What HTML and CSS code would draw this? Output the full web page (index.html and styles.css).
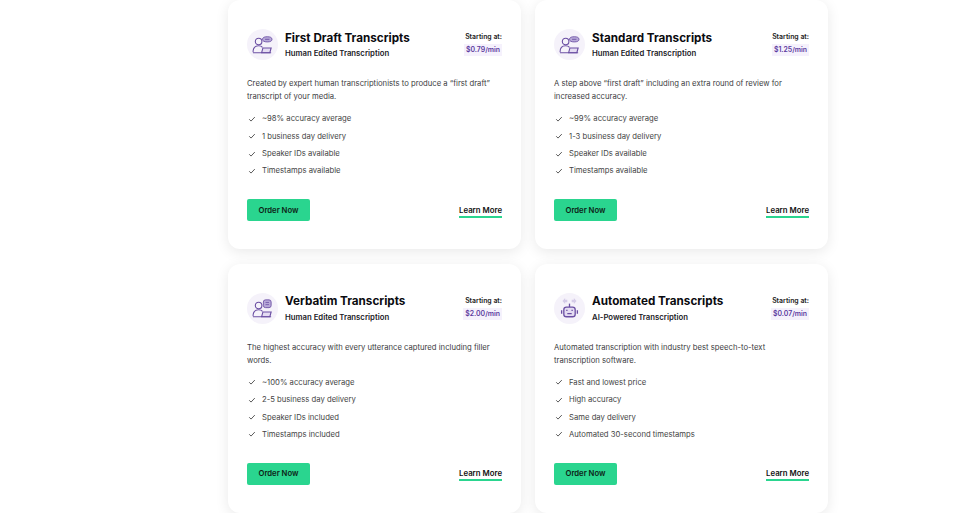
FILE: index.html
```html
<!DOCTYPE html>
<html lang="en">
<head>
    <meta charset="UTF-8">
    <meta name="viewport" content="width=device-width, initial-scale=1.0">
    <title>Transcripts</title>
    <link rel="stylesheet" href="styles.css">
</head>
<body>
    <svg class="defs" width="0" height="0">
        <symbol id="person" viewBox="0 0 24 22">
            <g fill="none" stroke="#6b4fa3" stroke-width="1.3">
                <circle cx="7.5" cy="7.500" r="3.800"/>
                <path d="M1 20c0-5 2.500-7.500 6.500-7.500 2 0 3.500.6 4.500 1.700"/>
                <path d="M11 20.500l1.500-5.500h9.500l-1.500 5.500z" fill="#e4dcf2"/>
                <path d="M1 20.500h21"/>
            </g>
        </symbol>
        <symbol id="check" viewBox="0 0 10 10">
            <path d="M1.500 5.300l2.300 2.300 4.700-5" fill="none" stroke="#444" stroke-width="1.100"/>
        </symbol>
    </svg>

    <main class="grid">
        <section class="card">
            <div class="card-head">
                <div class="icon-circle">
                    <svg class="icon" viewBox="0 0 24 22"><use href="#person"/>
                        <ellipse cx="17.500" cy="5" rx="5.500" ry="3" fill="#b7a8d8" stroke="#6b4fa3"/>
                        <path d="M15 5h5" stroke="#6b4fa3"/>
                    </svg>
                </div>
                <div class="titles">
                    <h2>First Draft Transcripts</h2>
                    <p class="subtitle">Human Edited Transcription</p>
                </div>
                <div class="price">
                    <span class="price-label">Starting at:</span>
                    <span class="price-value">$0.79/min</span>
                </div>
            </div>
            <p class="desc">Created by expert human transcriptionists to produce a “first draft” transcript of your media.</p>
            <ul class="features">
                <li><svg class="check"><use href="#check"/></svg>~98% accuracy average</li>
                <li><svg class="check"><use href="#check"/></svg>1 business day delivery</li>
                <li><svg class="check"><use href="#check"/></svg>Speaker IDs available</li>
                <li><svg class="check"><use href="#check"/></svg>Timestamps available</li>
            </ul>
            <div class="actions">
                <a class="order-btn" href="#">Order Now</a>
                <a class="learn-more" href="#">Learn More</a>
            </div>
        </section>

        <section class="card">
            <div class="card-head">
                <div class="icon-circle">
                    <svg class="icon" viewBox="0 0 24 22"><use href="#person"/>
                        <ellipse cx="17.500" cy="5" rx="5.500" ry="3" fill="#b7a8d8" stroke="#6b4fa3"/>
                        <path d="M15 5h5" stroke="#6b4fa3"/>
                    </svg>
                </div>
                <div class="titles">
                    <h2>Standard Transcripts</h2>
                    <p class="subtitle">Human Edited Transcription</p>
                </div>
                <div class="price">
                    <span class="price-label">Starting at:</span>
                    <span class="price-value">$1.25/min</span>
                </div>
            </div>
            <p class="desc">A step above “first draft” including an extra round of review for increased accuracy.</p>
            <ul class="features">
                <li><svg class="check"><use href="#check"/></svg>~99% accuracy average</li>
                <li><svg class="check"><use href="#check"/></svg>1-3 business day delivery</li>
                <li><svg class="check"><use href="#check"/></svg>Speaker IDs available</li>
                <li><svg class="check"><use href="#check"/></svg>Timestamps available</li>
            </ul>
            <div class="actions">
                <a class="order-btn" href="#">Order Now</a>
                <a class="learn-more" href="#">Learn More</a>
            </div>
        </section>

        <section class="card">
            <div class="card-head">
                <div class="icon-circle">
                    <svg class="icon" viewBox="0 0 24 22"><use href="#person"/>
                        <rect x="13" y="1" width="9" height="9" rx="2.500" fill="#b7a8d8" stroke="#6b4fa3"/>
                        <path d="M15.500 4h4M15.500 6.500h4" stroke="#6b4fa3" stroke-width=".9"/>
                    </svg>
                </div>
                <div class="titles">
                    <h2>Verbatim Transcripts</h2>
                    <p class="subtitle">Human Edited Transcription</p>
                </div>
                <div class="price">
                    <span class="price-label">Starting at:</span>
                    <span class="price-value">$2.00/min</span>
                </div>
            </div>
            <p class="desc">The highest accuracy with every utterance captured including filler words.</p>
            <ul class="features">
                <li><svg class="check"><use href="#check"/></svg>~100% accuracy average</li>
                <li><svg class="check"><use href="#check"/></svg>2-5 business day delivery</li>
                <li><svg class="check"><use href="#check"/></svg>Speaker IDs included</li>
                <li><svg class="check"><use href="#check"/></svg>Timestamps included</li>
            </ul>
            <div class="actions">
                <a class="order-btn" href="#">Order Now</a>
                <a class="learn-more" href="#">Learn More</a>
            </div>
        </section>

        <section class="card">
            <div class="card-head">
                <div class="icon-circle">
                    <svg class="icon robot" viewBox="0 0 24 26">
                        <g fill="#d5cce8">
                            <path d="M4 5l3-3.500v2h2.500v3H7v2z"/>
                            <path d="M20 5l-3-3.500v2h-2.500v3H17v2z"/>
                        </g>
                        <g fill="none" stroke="#6b4fa3" stroke-width="1.500">
                            <path d="M12 8v4"/>
                            <rect x="5.500" y="12" width="13" height="11" rx="3" fill="#e4dcf2"/>
                            <path d="M3 15.500v4M21 15.500v4M9.500 19.500h5"/>
                            <path d="M9 15v1.500M15 15v1.500"/>
                        </g>
                    </svg>
                </div>
                <div class="titles">
                    <h2>Automated Transcripts</h2>
                    <p class="subtitle">AI-Powered Transcription</p>
                </div>
                <div class="price">
                    <span class="price-label">Starting at:</span>
                    <span class="price-value">$0.07/min</span>
                </div>
            </div>
            <p class="desc">Automated transcription with industry best speech-to-text transcription software.</p>
            <ul class="features">
                <li><svg class="check"><use href="#check"/></svg>Fast and lowest price</li>
                <li><svg class="check"><use href="#check"/></svg>High accuracy</li>
                <li><svg class="check"><use href="#check"/></svg>Same day delivery</li>
                <li><svg class="check"><use href="#check"/></svg>Automated 30-second timestamps</li>
            </ul>
            <div class="actions">
                <a class="order-btn" href="#">Order Now</a>
                <a class="learn-more" href="#">Learn More</a>
            </div>
        </section>
    </main>
</body>
</html>
```
FILE: styles.css
```css
* {
    box-sizing: border-box;
    margin: 0;
    padding: 0;
}

body {
    background-color: #fff;
    color: #111;
    font-family: Inter, "Liberation Sans", sans-serif;
    overflow: hidden;
}

.defs {
    display: block;
    height: 0;
}

.grid {
    display: grid;
    grid-template-columns: 293px 293px;
    column-gap: 14px;
    row-gap: 14.500px;
    margin-left: 228px;
    width: 600px;
}

.card {
    background: #fff;
    border-radius: 12px;
    box-shadow: 0 3px 14px rgba(0, 0, 0, 0.09);
    height: 249px;
    padding: 29.300px 19px 0;
}

.card-head {
    display: flex;
    align-items: flex-start;
    height: 38px;
}

.icon-circle {
    width: 31px;
    height: 31px;
    border-radius: 50%;
    background: #f5f2fa;
    display: flex;
    align-items: center;
    justify-content: center;
    flex-shrink: 0;
    margin-right: 7px;
}

.icon {
    width: 21px;
    height: 19px;
}

.robot {
    height: 24px;
}

.titles {
    flex: 1;
}

.titles h2 {
    font-size: 11.700px;
    font-weight: 700;
    line-height: 17px;
    color: #0b0b0f;
    padding-top: 0.500px;
}

.subtitle {
    font-size: 7.750px;
    font-weight: 600;
    line-height: 12px;
    margin-top: 0.500px;
    color: #1a1a1f;
}

.price {
    display: flex;
    flex-direction: column;
    align-items: flex-end;
    padding-top: 2px;
}

.price-label {
    font-size: 6.900px;
    font-weight: 600;
    line-height: 12px;
    color: #222;
}

.price-value {
    font-size: 6.900px;
    font-weight: 600;
    line-height: 12px;
    margin-top: 1px;
    padding: 0 2px;
    background: #f5f1fc;
    color: #5b3a9e;
}

.desc {
    font-size: 7.700px;
    line-height: 13px;
    margin-top: 10px;
    color: #3d3d42;
}

.features {
    list-style: none;
    margin-top: 7px;
}

.features li {
    display: flex;
    align-items: center;
    font-size: 7.700px;
    height: 17.300px;
    color: #444;
}

.check {
    width: 8px;
    height: 8px;
    margin-left: 1px;
    margin-right: 6px;
}

.actions {
    display: flex;
    align-items: center;
    justify-content: space-between;
    margin-top: 19.700px;
}

.order-btn {
    background: #2ad58f;
    border-radius: 2px;
    color: #0d1f17;
    font-size: 7.700px;
    font-weight: 600;
    width: 63px;
    height: 22px;
    display: flex;
    align-items: center;
    justify-content: center;
    text-decoration: none;
}

.learn-more {
    color: #111;
    font-size: 7.800px;
    font-weight: 600;
    line-height: 11px;
    border-bottom: 2px solid #2ad58f;
    padding-top: 2px;
    text-decoration: none;
}
```
